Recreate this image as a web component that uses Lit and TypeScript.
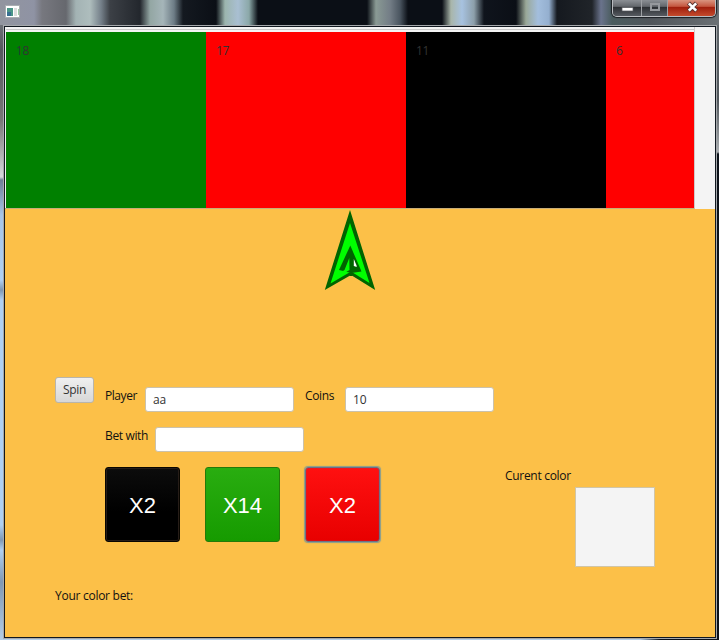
import { LitElement, html, css } from "lit";
import { customElement } from "lit/decorators.js";
import { classMap } from "lit/directives/class-map.js";

const slots = [
  { n: 18, color: "green" },
  { n: 17, color: "red" },
  { n: 11, color: "black" },
  { n: 6, color: "red" },
];

@customElement("title-bar")
class TitleBar extends LitElement {
  static styles = css`
    :host { display: flex; height: 25px; justify-content: space-between; align-items: flex-start; }
    .app { display: block; margin: 5px 0 0 5px; }
    .controls {
      display: flex; box-sizing: border-box; width: 104px; height: 17px; margin-right: 3px;
      border: 1px solid #b9bcc0; border-top: 0; border-radius: 0 0 5px 5px; overflow: hidden;
      box-shadow: 0 0 1px 1px #1a1d22;
    }
    .ctl { display: flex; justify-content: center; width: 28px; border-right: 1px solid #9da0a4;
      background: linear-gradient(#8b8f94 0, #63676c 40%, #2b2e32 45%, #565a60 100%); }
    .mid { width: 26px; }
    .close { width: 47px; border: 0; background: linear-gradient(#d9947f 0, #c4563f 40%, #a01e0c 45%, #c44a2c 100%); }
  `;
  render() {
    return html`
      <svg class="app" width="16" height="14" viewBox="0 0 16 14">
        <rect x=".5" y=".5" width="14" height="12" fill="#fff" stroke="#a9adb1" />
        <rect x="2" y="3" width="6" height="8" fill="#4b9587" />
        <rect x="2" y="7" width="4" height="4" fill="#386f91" />
        <rect x="9" y="3" width="3" height="8" fill="#dedede" />
        <rect x="13" y="4" width="1" height="6" fill="#9ccaa5" />
      </svg>
      <div class="controls">
        <div class="ctl"><svg width="14" height="16"><rect x="2" y="7.5" width="11" height="3.5" fill="#fff" stroke="#55585c" stroke-width=".7" /></svg></div>
        <div class="ctl mid"><svg width="14" height="16"><rect x="3" y="4" width="8" height="6" fill="none" stroke="#96999d" stroke-width="2" /></svg></div>
        <div class="ctl close"><svg width="14" height="16">
          <path d="M3.5 3 L11.5 11 M11.5 3 L3.5 11" stroke="#5a3430" stroke-width="4.4" />
          <path d="M3.8 3.3 L11.2 10.7 M11.2 3.3 L3.8 10.7" stroke="#fff" stroke-width="2.6" /></svg></div>
      </div>
    `;
  }
}

@customElement("number-reel")
class NumberReel extends LitElement {
  static styles = css`
    :host { display: block; height: 182px; background: #f4f4f4; }
    .reel { box-sizing: border-box; width: 690px; height: 182px; padding: 2px 0 0 1px;
      border-right: 1px solid #cfcaca; border-bottom: 1px solid #c8ad78; }
    .line { height: 1px; background: #c8c8c8; margin-bottom: 2px; }
    .track { display: flex; overflow: hidden; height: 176px; }
    .slot { flex: 0 0 200px; box-sizing: border-box; padding: 10px 10px; font-size: 12px; line-height: 17px; color: #333; letter-spacing: -.4px; }
    .green { background: #008000; }
    .red { background: #f00; }
    .black { background: #000; }
  `;
  render() {
    return html`<div class="reel"><div class="line"></div><div class="track">
      ${slots.map((s) => html`<div class=${classMap({ slot: true, [s.color]: true })}>${s.n}</div>`)}
    </div></div>`;
  }
}

@customElement("app-root")
class AppRoot extends LitElement {
  static styles = css`
    :host {
      display: block; box-sizing: border-box; width: 719px; height: 640px; overflow: hidden;
      font-family: "Open Sans", "Noto Sans", sans-serif; font-size: 12px; color: #111;
      background:
        linear-gradient(90deg, #92959f 0, #8f93a4 34px, #77787f 42px, #66686e 66px, #a3b3b4 76px, #aebdbd 90px, #75808a 101px, #3c4046 110px,
          #23272d 140px, #93a6a3 150px, #a5b5b9 163px, #6d7c86 174px, #141920 183px, #0b0f16 216px, #9cb5ae 225px, #a9bfd2 238px, #8ba8a8 249px, #0b0f16 258px,
          #0b0f16 367px, #8a9a94 376px, #737d86 390px, #4a5560 400px, #0b0f16 408px, #0b0f16 442px, #a9b6aa 451px, #a7c2e0 462px, #8d9faa 474px, #0f141c 484px,
          #0b0f16 516px, #9aa898 526px, #a3bedd 538px, #94afcf 549px, #15191f 557px, #202429 592px, #6a738c 601px, #4a5c5e 612px, #50555a 650px, #6a7074 719px) 0 0 / 719px 25px no-repeat,
        linear-gradient(#85888e 0, #55585e 50px, #777 120px, #d5d8dc 177px, #6d7f96 180px, #a7c5e8 215px, #b0d0f2 280px, #7d97b3 290px, #b0d0f2 300px, #b0d0f2 525px, #7f98b4 540px, #b0d0f2 550px, #7f98b4 582px, #b4cde6 640px) 0 0 / 5px 640px no-repeat,
        linear-gradient(#646a6e 0, #50565b 100px, #a9adb0 152px, #0c1118 154px, #0c1118 640px) 715px 0 / 4px 640px no-repeat,
        linear-gradient(90deg, #b7d0e8 0, #b7d0e8 640px, #0c1118 660px);
    }
    .client {
      display: flex; flex-direction: column; box-sizing: border-box; width: 712px; height: 612px; margin-left: 4px;
      margin-top: 1px; border: 1px solid #111820; box-shadow: 0 0 0 1px #a6a9ac; background: #fcc048;
    }
    .pointer { display: block; width: 56px; height: 84px; margin-left: 318px; }
    .body { padding: 84px 50px 0; }
    .row { display: flex; align-items: flex-start; }
    .label { line-height: 17px; white-space: nowrap; }
    .spin { box-sizing: border-box; width: 39px; height: 26px; border: 1px solid #b9b5ab; border-radius: 3px;
      background: linear-gradient(#f0f0f0, #d7d7d7); font: inherit; line-height: 24px; color: #333; text-align: center; padding: 0; margin-right: 11px; letter-spacing: -.3px; }
    .field { box-sizing: border-box; width: 149px; height: 25px; border: 1px solid #cbc2ac; border-radius: 3px; background: #fff;
      padding: 0 7px; line-height: 24px; color: #333; letter-spacing: -.2px; }
    .fields { display: flex; margin-top: 10px; }
    .player { width: 40px; letter-spacing: -.45px; }
    .coins { width: 40px; margin-left: 11px; letter-spacing: -.35px; }
    .second { margin: 15px 0 0 50px; }
    .with { width: 50px; letter-spacing: -.35px; }
    .bets { display: flex; gap: 25px; margin: 15px 0 0 50px; }
    .bet { box-sizing: border-box; width: 75px; height: 75px; border: 1px solid; border-radius: 3px; color: #fff; padding: 0;
      font: 22px/75px "Liberation Sans", Arial, sans-serif; text-align: center; }
    .black { background: linear-gradient(#0c0c0c, #000 60%); border-color: #090600; box-shadow: inset 0 0 0 1px #261d18; }
    .green { background: linear-gradient(#29ad10, #169b00); border-color: #24790a; }
    .red { background: linear-gradient(#ff1010, #e80000); border-color: #6c7285; box-shadow: 0 0 1px 1px #869d91, inset 0 0 1px #5067a0; }
    .current { margin: 15px 0 0 125px; }
    .current .label { letter-spacing: -.3px; }
    .swatch { box-sizing: border-box; width: 80px; height: 80px; margin: 3px 0 0 70px; border: 1px solid #d1c5a6; background: #f4f4f4; }
    .result { margin-top: 20px; letter-spacing: -.27px; }
  `;
  render() {
    return html`
      <title-bar></title-bar>
      <div class="client">
        <number-reel></number-reel>
        <svg class="pointer" viewBox="0 0 56 84">
          <path d="M27 1 L52.2 81 L28 66 L1.8 81 Z" fill="#006400" />
          <path d="M27 14 L46.5 74 L28 62.5 L7.5 74.5 Z" fill="#0f0" />
          <path d="M27.3 36.5 L38.5 62.5 L28.5 64 L16 61 Z" fill="#006400" />
          <path d="M26.3 49 L26.5 61 L13 69 L13 66.5 L21.5 61 Z" fill="#0f0" />
          <path d="M28 58 L29.5 67 L26.5 67 Z" fill="#006400" />
          <path d="M30.8 50 L33.6 56.5 L33.6 58 L30.8 57 Z" fill="#fff" />
        </svg>
        <div class="body">
          <div class="row">
            <button class="spin">Spin</button>
            <div class="fields">
              <div class="label player">Player</div><div class="field">aa</div>
              <div class="label coins">Coins</div><div class="field">10</div>
            </div>
          </div>
          <div class="row second"><div class="label with">Bet with</div><div class="field"></div></div>
          <div class="row">
            <div class="bets">
              <button class="bet black">X2</button><button class="bet green">X14</button><button class="bet red">X2</button>
            </div>
            <div class="current"><div class="label">Curent color</div><div class="swatch"></div></div>
          </div>
          <div class="label result">Your color bet:</div>
        </div>
      </div>
    `;
  }
}
